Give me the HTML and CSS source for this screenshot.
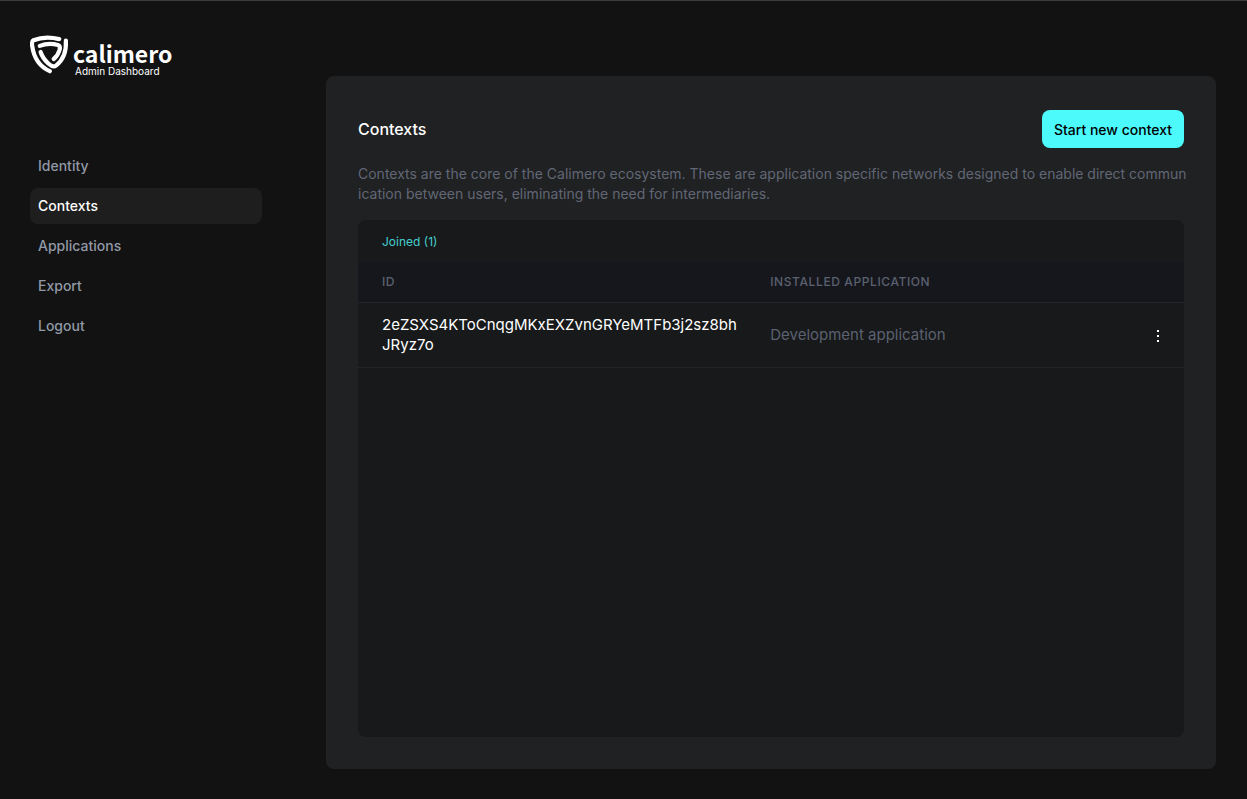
FILE: index.html
```html
<!DOCTYPE html>
<html lang="en">
<head>
  <meta charset="utf-8">
  <meta name="viewport" content="width=device-width, initial-scale=1">
  <title>Calimero Admin Dashboard</title>
  <link rel="stylesheet" href="styles.css">
</head>
<body>
  <div class="app">
    <aside class="sidebar">
      <div class="logo">
        <svg class="logo-mark" viewBox="0 0 40 40" fill="none" stroke="currentColor" stroke-width="4.2" stroke-linecap="round" stroke-linejoin="round" aria-hidden="true">
          <path d="M29.2 4.100C21 2 11 2.200 3.500 5.200C1.600 6.200 1.900 9 2.200 11C3.700 22 9.500 31.500 19.800 36.200"/>
          <path d="M35.900 5.700C36.400 15.500 33.500 25 26 30.600C23.500 32.400 20.500 30.500 18.300 28.500C14.500 25 11.800 20.800 10.600 17"/>
          <path d="M9.800 10.900C15.500 8.700 22.500 8.600 28 10C30.500 10.700 30 13 29.600 14.700C28.600 18.400 26.800 21.500 23.700 24"/>
        </svg>
        <div class="logo-text">
          <span class="logo-name">calimero</span>
          <span class="logo-sub">Admin Dashboard</span>
        </div>
      </div>
      <nav class="nav">
        <a class="nav-link" href="#identity">Identity</a>
        <a class="nav-link nav-link-active" href="#contexts" aria-current="page">Contexts</a>
        <a class="nav-link" href="#applications">Applications</a>
        <a class="nav-link" href="#export">Export</a>
        <a class="nav-link" href="#logout">Logout</a>
      </nav>
    </aside>
    <main class="card">
      <header class="card-header">
        <h1 class="card-title">Contexts</h1>
        <button class="primary-button" type="button">Start new context</button>
      </header>
      <p class="description">Contexts are the core of the Calimero ecosystem. These are application specific networks designed to enable direct communication between users, eliminating the need for intermediaries.</p>
      <section class="panel">
        <div class="tabs"><button class="tab" type="button">Joined (1)</button></div>
        <table class="contexts">
          <thead>
            <tr><th class="col-id" scope="col">ID</th><th class="col-app" scope="col">INSTALLED APPLICATION</th><th class="col-menu" scope="col"></th></tr>
          </thead>
          <tbody>
            <tr>
              <td class="context-id">2eZSXS4KToCnqgMKxEXZvnGRYeMTFb3j2sz8bhJRyz7o</td>
              <td class="context-app">Development application</td>
              <td class="context-menu">
                <button class="menu-button" type="button" aria-label="Context options">
                  <svg class="menu-icon" viewBox="0 0 20 20" fill="currentColor" shape-rendering="crispEdges" aria-hidden="true"><path d="M9 4h2v2H9zM9 9h2v2H9zM9 14h2v2H9z"/></svg>
                </button>
              </td>
            </tr>
          </tbody>
        </table>
      </section>
    </main>
  </div>
</body>
</html>
```
FILE: styles.css
```css
* {
  box-sizing: border-box;
}

body {
  margin: 0;
  background: #121212;
  color: #fff;
  font-family: Inter, "Liberation Sans", sans-serif;
}

button {
  border: 0;
  background: none;
  font-family: inherit;
  cursor: pointer;
}

.app {
  display: flex;
  gap: 64px;
  min-height: 100vh;
  padding: 0 31px 30px 30px;
  border-top: 1px solid #3c3c3c;
}

.sidebar {
  flex: 0 0 232px;
  padding-top: 34px;
}

.logo {
  display: flex;
  gap: 3px;
}

.logo-mark {
  width: 40px;
  height: 40px;
}

.logo-text {
  display: flex;
  flex-direction: column;
  padding-top: 5px;
}

.logo-name {
  font-family: "Noto Sans CJK JP", "Noto Sans", sans-serif;
  font-size: 23px;
  font-weight: 700;
  line-height: 26px;
}

.logo-sub {
  padding-left: 2px;
  font-size: 10px;
  line-height: 10px;
}

.nav {
  display: flex;
  flex-direction: column;
  gap: 4px;
  margin-top: 72px;
}

.nav-link {
  padding: 8px;
  border-radius: 8px;
  color: #9198a6;
  font-size: 14px;
  font-weight: 500;
  line-height: 20px;
  text-decoration: none;
}

.nav-link-active {
  background: #1e1e1e;
  color: #fff;
}

.card {
  display: flex;
  flex: 1;
  flex-direction: column;
  min-width: 0;
  margin-top: 75px;
  padding: 34px 32px 32px;
  border-radius: 8px;
  background: #202122;
}

.card-header {
  display: flex;
  align-items: center;
  justify-content: space-between;
}

.card-title {
  margin: 0;
  font-size: 16px;
  font-weight: 500;
  line-height: 20px;
}

.primary-button {
  padding: 10px 12px 8px;
  border-radius: 8px;
  background: #4cfafc;
  color: #000;
  font-size: 14px;
  font-weight: 500;
  line-height: 20px;
}

.description {
  margin: 16px -4px 16px 0;
  color: #616776;
  font-size: 14px;
  font-weight: 400;
  line-height: 20px;
  word-break: break-all;
}

.panel {
  flex: 1;
  overflow: hidden;
  border-radius: 8px;
  background: #17191a;
}

.tabs {
  display: flex;
  padding: 12px 24px 10px;
}

.tab {
  padding: 0;
  color: #45cfd0;
  font-size: 12px;
  line-height: 20px;
}

.contexts {
  width: 100%;
  border-collapse: collapse;
  table-layout: fixed;
  text-align: left;
}

.contexts th {
  height: 40px;
  padding: 0 24px;
  border-bottom: 1px solid #23262b;
  background: #16171d;
  color: #5b6170;
  font-size: 12px;
  font-weight: 500;
  letter-spacing: 0.05em;
}

.contexts td {
  height: 65px;
  padding: 0 0 0 24px;
  border-bottom: 1px solid #212325;
  font-size: 15px;
  line-height: 20px;
}

.contexts .col-id {
  width: 47%;
}

.contexts .col-app {
  padding-left: 24px;
}

.contexts .col-menu {
  width: 60px;
}

.contexts .context-id {
  padding-right: 4px;
  word-break: break-all;
}

.contexts .context-app {
  color: #5b6170;
}

.contexts .context-menu {
  padding: 3px 16px 0 0;
  text-align: right;
}

.menu-button {
  padding: 0;
  color: #fff;
  vertical-align: middle;
}

.menu-icon {
  display: block;
  width: 20px;
  height: 20px;
}
```
